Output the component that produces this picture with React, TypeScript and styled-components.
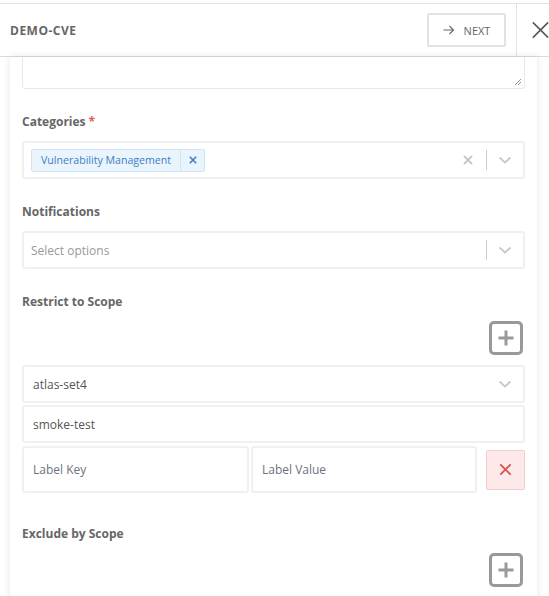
import React from "react";
import styled, { createGlobalStyle } from "styled-components";

const GlobalStyle = createGlobalStyle`
  html, body {
    margin: 0;
    padding: 0;
    background: #fff;
    font-family: "Open Sans", "Liberation Sans", sans-serif;
    overflow: hidden;
  }
  * {
    box-sizing: border-box;
  }
`;

const Page = styled.div`
  width: 549px;
  height: 596px;
  padding-top: 3px;
  overflow: hidden;
`;

const Header = styled.header`
  height: 54px;
  display: flex;
  align-items: stretch;
  border-top: 1px solid #e2e2e2;
  border-bottom: 1px solid #dcdcdc;
  background: #fff;
`;

const Title = styled.div`
  flex: 1;
  display: flex;
  align-items: center;
  padding-left: 10px;
  font-size: 12px;
  font-weight: 700;
  letter-spacing: 0.5px;
  color: #666;
`;

const NextButton = styled.button`
  align-self: center;
  width: 79px;
  height: 34px;
  margin-right: 10px;
  display: flex;
  align-items: center;
  justify-content: center;
  gap: 9px;
  background: #fff;
  border: 2px solid #e2e2e2;
  border-radius: 2px;
  font-family: inherit;
  font-size: 11px;
  color: #666;
  cursor: pointer;
`;

const CloseArea = styled.div`
  width: 33px;
  border-left: 1px solid #e2e2e2;
  display: flex;
  align-items: center;
  padding-left: 15px;
`;

const Scroller = styled.div`
  padding: 0 12px 0 10px;
`;

const Card = styled.section`
  background: #fff;
  box-shadow: 0 0 8px rgba(0, 0, 0, 0.1);
  padding: 0 12px 20px;
  overflow: hidden;
`;

const TextArea = styled.div`
  height: 70px;
  margin-top: -38px;
  border: 1px solid #e8e8e8;
  border-radius: 3px;
  display: flex;
  align-items: flex-end;
  justify-content: flex-end;
  padding: 0 2px 2px 0;
`;

const Field = styled.div<{ $gap?: number }>`
  margin-top: ${(p) => p.$gap ?? 25}px;
`;

const Label = styled.div`
  font-size: 12px;
  line-height: 16px;
  font-weight: 700;
  color: #666;
  margin-bottom: 11px;
`;

const Required = styled.span`
  color: #e05a5a;
  margin-left: 3px;
`;

const SelectBox = styled.div`
  height: 38px;
  border: 2px solid #f0f0f0;
  border-radius: 3px;
  display: flex;
  align-items: center;
  padding-left: 7px;
  background: #fff;
`;

const SelectValue = styled.div<{ $muted?: boolean }>`
  flex: 1;
  display: flex;
  align-items: center;
  font-size: 12px;
  color: ${(p) => (p.$muted ? "#999" : "#555")};
  padding-left: ${(p) => (p.$muted ? "0" : "2px")};
`;

const Tag = styled.div`
  display: flex;
  height: 23px;
  margin-left: -2px;
  border: 1px solid #cfe4f7;
  background: #eaf4fd;
  border-radius: 2px;
  color: #3a7fc2;
  font-size: 10.6px;
`;

const TagLabel = styled.span`
  display: flex;
  align-items: center;
  padding: 0 9px;
`;

const TagRemove = styled.span`
  display: flex;
  align-items: center;
  justify-content: center;
  width: 24px;
  border-left: 1px solid #cfe4f7;
`;

const Indicators = styled.div`
  display: flex;
  align-items: center;
  height: 100%;
`;

const Indicator = styled.span`
  width: 36px;
  display: flex;
  align-items: center;
  justify-content: center;
`;

const Separator = styled.span`
  width: 1px;
  height: 20px;
  background: #ccc;
`;

const AddRow = styled.div`
  display: flex;
  justify-content: flex-end;
  padding-right: 2px;
  margin-top: 2px;
  margin-bottom: 10px;
`;

const AddButton = styled.button`
  width: 34px;
  height: 34px;
  padding: 0;
  border: none;
  background: none;
  cursor: pointer;
  display: flex;
  align-items: center;
  justify-content: center;
`;

const TextInput = styled.div<{ $tall?: boolean }>`
  height: ${(p) => (p.$tall ? "47px" : "38px")};
  border: 2px solid #f0f0f0;
  border-radius: 3px;
  display: flex;
  align-items: center;
  padding-left: 9px;
  font-size: 12px;
  color: #555;
`;

const ScopeList = styled.div`
  display: flex;
  flex-direction: column;
  gap: 2px;
`;

const LabelRow = styled.div`
  display: flex;
  align-items: center;
  gap: 2px;
  margin-top: 1px;
`;

const LabelInput = styled(TextInput)<{ $width: number }>`
  flex: 0 0 ${(p) => p.$width}px;
  color: #6b7280;
`;

const DeleteButton = styled.button`
  margin-left: auto;
  width: 39px;
  height: 40px;
  border: 1px solid #f7cccc;
  background: #fde9e9;
  border-radius: 2px;
  display: flex;
  align-items: center;
  justify-content: center;
  padding: 0;
  cursor: pointer;
`;

const Chevron = () => (
  <svg width="14" height="8" viewBox="0 0 14 8" fill="none">
    <path d="M1.5 1.5 7 6.5l5.5-5" stroke="#c8c8c8" strokeWidth="1.8" />
  </svg>
);

const SmallX = ({ color, size, w }: { color: string; size: number; w: number }) => (
  <svg width={size} height={size} viewBox="0 0 10 10">
    <path d="M1 1l8 8M9 1l-8 8" stroke={color} strokeWidth={w} />
  </svg>
);

const PlusSquare = () => (
  <svg width="34" height="34" viewBox="0 0 34 34" fill="none">
    <rect x="1.5" y="1.5" width="31" height="31" rx="3.5" stroke="#999" strokeWidth="3" />
    <path d="M17 9.5v15M9.5 17h15" stroke="#999" strokeWidth="3" />
  </svg>
);

const App: React.FC = () => {
  return (
    <Page>
      <GlobalStyle />
      <Header>
        <Title>DEMO-CVE</Title>
        <NextButton>
          <svg width="12" height="10" viewBox="0 0 12 10" fill="none">
            <path d="M0.5 5h10M6.5 1l4 4-4 4" stroke="#666" strokeWidth="1.1" />
          </svg>
          NEXT
        </NextButton>
        <CloseArea>
          <svg width="20" height="20" viewBox="0 0 20 20">
            <path d="M1 1l18 18M19 1L1 19" stroke="#555" strokeWidth="1.8" />
          </svg>
        </CloseArea>
      </Header>

      <Scroller>
        <Card>
          <TextArea>
            <svg width="8" height="8" viewBox="0 0 8 8">
              <path d="M7 1L1 7M7 4L4 7" stroke="#888" strokeWidth="0.9" />
            </svg>
          </TextArea>

          <Field>
            <Label>
              Categories<Required>*</Required>
            </Label>
            <SelectBox>
              <SelectValue>
                <Tag>
                  <TagLabel>Vulnerability Management</TagLabel>
                  <TagRemove>
                    <SmallX color="#3a7fc2" size={8} w={2} />
                  </TagRemove>
                </Tag>
              </SelectValue>
              <Indicators>
                <Indicator>
                  <SmallX color="#c8c8c8" size={10} w={2} />
                </Indicator>
                <Separator />
                <Indicator>
                  <Chevron />
                </Indicator>
              </Indicators>
            </SelectBox>
          </Field>

          <Field>
            <Label>Notifications</Label>
            <SelectBox>
              <SelectValue $muted>Select options</SelectValue>
              <Indicators>
                <Separator />
                <Indicator>
                  <Chevron />
                </Indicator>
              </Indicators>
            </SelectBox>
          </Field>

          <Field>
            <Label>Restrict to Scope</Label>
            <AddRow>
              <AddButton>
                <PlusSquare />
              </AddButton>
            </AddRow>
            <ScopeList>
              <SelectBox>
                <SelectValue>atlas-set4</SelectValue>
                <Indicators>
                  <Indicator>
                    <Chevron />
                  </Indicator>
                </Indicators>
              </SelectBox>
              <TextInput>smoke-test</TextInput>
              <LabelRow>
                <LabelInput $tall $width={227}>
                  Label Key
                </LabelInput>
                <LabelInput $tall $width={226}>
                  Label Value
                </LabelInput>
                <DeleteButton>
                  <SmallX color="#d9534f" size={13} w={1.4} />
                </DeleteButton>
              </LabelRow>
            </ScopeList>
          </Field>

          <Field $gap={33}>
            <Label>Exclude by Scope</Label>
            <AddRow>
              <AddButton>
                <PlusSquare />
              </AddButton>
            </AddRow>
          </Field>
        </Card>
      </Scroller>
    </Page>
  );
};

export default App;
